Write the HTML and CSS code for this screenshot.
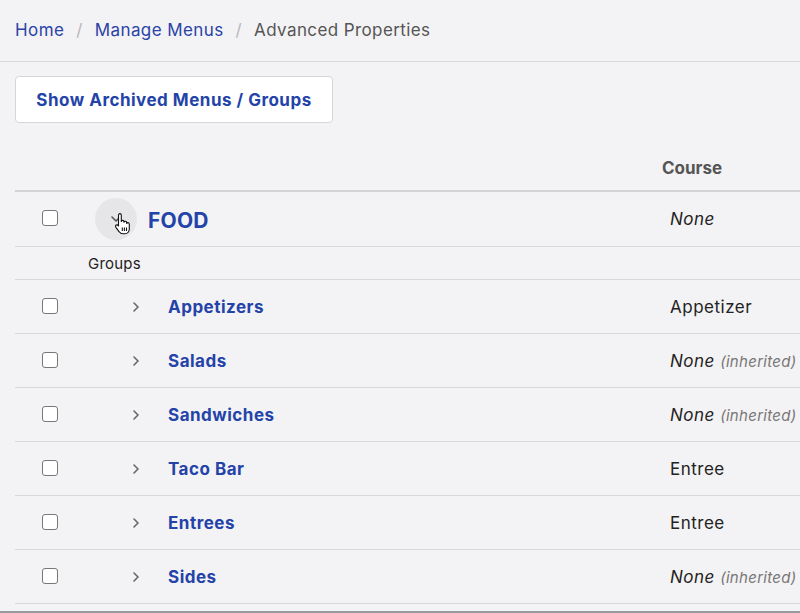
FILE: index.html
```html
<!DOCTYPE html>
<html lang="en">
<head>
<meta charset="utf-8">
<title>Advanced Properties</title>
<link rel="stylesheet" href="styles.css">
</head>
<body>
<nav class="breadcrumb">
  <a class="crumb-link" href="#">Home</a>
  <span class="sep">/</span>
  <a class="crumb-link" href="#">Manage Menus</a>
  <span class="sep">/</span>
  <span class="crumb-current">Advanced Properties</span>
</nav>

<main class="content">
  <button class="archive-btn" type="button">Show Archived Menus / Groups</button>

  <div class="table">
    <div class="thead">
      <div class="cell-check"></div>
      <div class="cell-name"></div>
      <div class="cell-course th">Course</div>
    </div>

    <div class="row menu-row">
      <div class="cell-check"><span class="checkbox"></span></div>
      <div class="cell-name">
        <span class="toggle-circle">
          <svg class="chev-down" width="12" height="12" viewBox="0 0 12 12"><path d="M2 4 L6 8 L10 4" fill="none" stroke="#555" stroke-width="1.6" stroke-linecap="round" stroke-linejoin="round"/></svg>
          <svg class="cursor" width="20" height="22" viewBox="0 0 20 22">
            <path d="M5.5 2.2c0-1 .6-1.6 1.4-1.6s1.4.6 1.4 1.6v6.3c.2-.8.8-1.2 1.5-1.1.8.1 1.2.7 1.2 1.5v.4c.2-.7.8-1.1 1.5-1 .8.1 1.2.7 1.2 1.5v.6c.3-.6.8-.9 1.4-.8.8.1 1.2.8 1.2 1.6v4.6c0 2.4-1.5 5-4.4 5H9.8c-1.6 0-2.7-.7-3.6-2L2.9 14.3c-.6-.9-.4-1.8.3-2.2.7-.4 1.5-.2 2 .5l.3.4Z" fill="#fff" stroke="#111" stroke-width="1.1" stroke-linejoin="round"/>
            <path d="M9.3 14.5v3.6M11.4 14.5v3.6M13.5 14.5v3.6" stroke="#111" stroke-width="1.1"/>
          </svg>
        </span>
        <a class="menu-name" href="#">FOOD</a>
      </div>
      <div class="cell-course"><em>None</em></div>
    </div>

    <div class="row sub-head">
      <div class="cell-check"></div>
      <div class="cell-name groups-label">Groups</div>
      <div class="cell-course"></div>
    </div>

    <div class="row group-row">
      <div class="cell-check"><span class="checkbox"></span></div>
      <div class="cell-name"><span class="chev"><svg width="8" height="12" viewBox="0 0 8 12"><path d="M2 2 L6 6 L2 10" fill="none" stroke="#666" stroke-width="1.6" stroke-linecap="round" stroke-linejoin="round"/></svg></span><a class="group-name" href="#">Appetizers</a></div>
      <div class="cell-course">Appetizer</div>
    </div>
    <div class="row group-row">
      <div class="cell-check"><span class="checkbox"></span></div>
      <div class="cell-name"><span class="chev"><svg width="8" height="12" viewBox="0 0 8 12"><path d="M2 2 L6 6 L2 10" fill="none" stroke="#666" stroke-width="1.6" stroke-linecap="round" stroke-linejoin="round"/></svg></span><a class="group-name" href="#">Salads</a></div>
      <div class="cell-course"><em>None</em> <span class="inherited">(inherited)</span></div>
    </div>
    <div class="row group-row">
      <div class="cell-check"><span class="checkbox"></span></div>
      <div class="cell-name"><span class="chev"><svg width="8" height="12" viewBox="0 0 8 12"><path d="M2 2 L6 6 L2 10" fill="none" stroke="#666" stroke-width="1.6" stroke-linecap="round" stroke-linejoin="round"/></svg></span><a class="group-name" href="#">Sandwiches</a></div>
      <div class="cell-course"><em>None</em> <span class="inherited">(inherited)</span></div>
    </div>
    <div class="row group-row">
      <div class="cell-check"><span class="checkbox"></span></div>
      <div class="cell-name"><span class="chev"><svg width="8" height="12" viewBox="0 0 8 12"><path d="M2 2 L6 6 L2 10" fill="none" stroke="#666" stroke-width="1.6" stroke-linecap="round" stroke-linejoin="round"/></svg></span><a class="group-name" href="#">Taco Bar</a></div>
      <div class="cell-course">Entree</div>
    </div>
    <div class="row group-row">
      <div class="cell-check"><span class="checkbox"></span></div>
      <div class="cell-name"><span class="chev"><svg width="8" height="12" viewBox="0 0 8 12"><path d="M2 2 L6 6 L2 10" fill="none" stroke="#666" stroke-width="1.6" stroke-linecap="round" stroke-linejoin="round"/></svg></span><a class="group-name" href="#">Entrees</a></div>
      <div class="cell-course">Entree</div>
    </div>
    <div class="row group-row">
      <div class="cell-check"><span class="checkbox"></span></div>
      <div class="cell-name"><span class="chev"><svg width="8" height="12" viewBox="0 0 8 12"><path d="M2 2 L6 6 L2 10" fill="none" stroke="#666" stroke-width="1.6" stroke-linecap="round" stroke-linejoin="round"/></svg></span><a class="group-name" href="#">Sides</a></div>
      <div class="cell-course"><em>None</em> <span class="inherited">(inherited)</span></div>
    </div>
  </div>
</main>
<div class="bottom-edge"></div>
</body>
</html>
```

FILE: styles.css
```css
* { box-sizing: border-box; }
html, body { margin: 0; padding: 0; }
body {
  background: #f3f2f4;
  font-family: Inter, "Noto Sans", "Liberation Sans", sans-serif;
  color: #222;
  width: 800px;
  height: 613px;
  overflow: hidden;
}
a { text-decoration: none; }

.breadcrumb {
  height: 62px;
  display: flex;
  align-items: center;
  padding: 0 15px 2px;
  border-bottom: 1px solid #d8d7da;
  font-size: 17px;
  letter-spacing: 0.4px;
}
.crumb-link { color: #2a43a6; }
.sep { color: #b8b7bb; margin: 0 12px; }
.crumb-current { color: #555; }

.content { padding: 14px 0 0 15px; }

.archive-btn {
  display: block;
  width: 318px;
  height: 47px;
  background: #fff;
  border: 1px solid #d6d5d9;
  border-radius: 4px;
  font-family: inherit;
  font-size: 17px;
  font-weight: 700;
  letter-spacing: 0.5px;
  color: #2443a8;
  padding: 0;
  cursor: pointer;
}

.table { width: 785px; margin-top: 21px; }
.thead, .row { display: flex; align-items: center; }
.thead {
  height: 48px;
  border-bottom: 2px solid #d3d2d5;
  padding-top: 2px;
}
.th { font-weight: 700; color: #555; font-size: 17px; margin-left: -8px; }
.row { border-bottom: 1px solid #d8d7da; height: 54px; }

.cell-check { width: 73px; padding-left: 27px; display: flex; align-items: center; }
.cell-name { width: 582px; display: flex; align-items: center; }
.cell-course { flex: 1; font-size: 17px; white-space: nowrap; letter-spacing: 0.5px; }
.th.cell-course { letter-spacing: 0; }
.cell-course em { font-style: italic; }
.inherited { font-style: italic; color: #777; font-size: 15px; letter-spacing: 0.3px; }

.checkbox {
  width: 16px; height: 16px;
  border: 1.5px solid #777;
  border-radius: 3px;
  background: #fff;
  display: block;
  margin-top: -2px;
}

.menu-row { height: 55px; }
.toggle-circle {
  position: relative;
  width: 42px; height: 42px;
  border-radius: 50%;
  background: #e6e5e8;
  margin-left: 7px;
  margin-right: 11px;
  display: flex; align-items: center; justify-content: center;
}
.cursor { position: absolute; left: 18px; top: 15px; }
.menu-name { color: #2443a8; font-weight: 700; font-size: 21px; letter-spacing: 0.2px; margin-top: 2px; }

.sub-head { height: 33px; }
.groups-label { font-size: 15px; color: #222; letter-spacing: 0.2px; }

.chev { width: 36px; margin-left: 44px; display: flex; align-items: center; }
.group-name { color: #2443a8; font-weight: 700; font-size: 17px; letter-spacing: 0.5px; }

.bottom-edge {
  position: fixed;
  left: 0; right: 0; bottom: 0;
  height: 2px;
  background: #9a999c;
}
```
